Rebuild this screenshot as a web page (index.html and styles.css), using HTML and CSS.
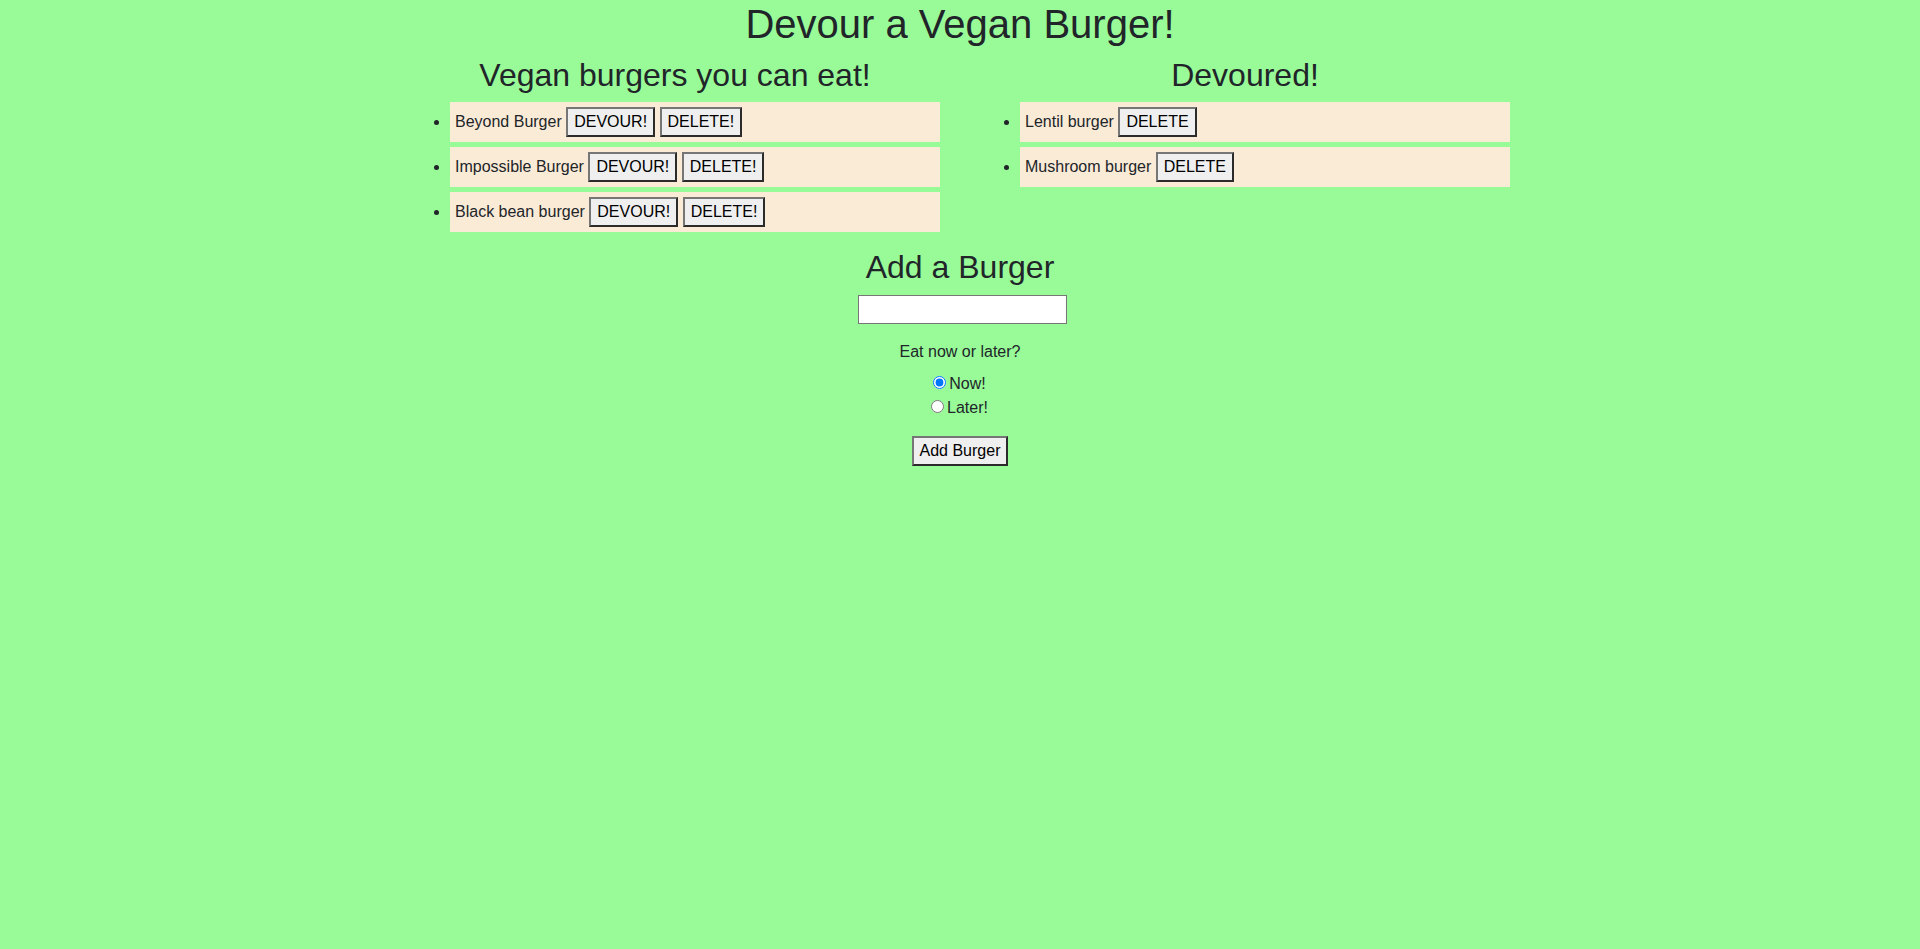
FILE: index.html
```html
<!DOCTYPE html>
<html lang="en">
<head>
<meta charset="utf-8">
<title>Devour a Vegan Burger!</title>
<link rel="stylesheet" href="styles.css">
</head>
<body>
<div class="page">
  <h1 class="title">Devour a Vegan Burger!</h1>
  <div class="columns">
    <div class="col">
      <h2 class="col-title">Vegan burgers you can eat!</h2>
      <ul class="burger-list">
        <li class="burger">Beyond Burger <button class="btn">DEVOUR!</button> <button class="btn">DELETE!</button></li>
        <li class="burger">Impossible Burger <button class="btn">DEVOUR!</button> <button class="btn">DELETE!</button></li>
        <li class="burger">Black bean burger <button class="btn">DEVOUR!</button> <button class="btn">DELETE!</button></li>
      </ul>
    </div>
    <div class="col">
      <h2 class="col-title">Devoured!</h2>
      <ul class="burger-list">
        <li class="burger">Lentil burger <button class="btn">DELETE</button></li>
        <li class="burger">Mushroom burger <button class="btn">DELETE</button></li>
      </ul>
    </div>
  </div>
  <form class="add-form">
    <h2 class="form-title">Add a Burger</h2>
    <div class="input-row"><input class="name-input" type="text"></div>
    <p class="question">Eat now or later?</p>
    <div class="radio-row"><input type="radio" name="when" id="now" checked><label for="now">Now!</label></div>
    <div class="radio-row"><input type="radio" name="when" id="later"><label for="later">Later!</label></div>
    <div class="submit-row"><button type="button" class="btn">Add Burger</button></div>
  </form>
</div>
</body>
</html>
```

FILE: styles.css
```css
html, body {
  margin: 0;
  padding: 0;
}

body {
  background: #98fb98;
  color: #212529;
  font-family: "Liberation Sans", Arial, sans-serif;
  font-size: 16px;
  line-height: 1.5;
  min-height: 949px;
}

.page {
  width: 1110px;
  margin: 0 auto;
}

.title {
  margin: 0 0 8px;
  font-size: 40px;
  font-weight: 400;
  line-height: 1.2;
  text-align: center;
}

.columns {
  display: grid;
  grid-template-columns: 1fr 1fr;
  column-gap: 30px;
}

.col-title,
.form-title {
  margin: 0 0 8px;
  font-size: 32px;
  font-weight: 400;
  line-height: 1.2;
  text-align: center;
}

.burger-list {
  margin: 0 0 16px;
  padding-left: 40px;
}

.burger {
  margin: 5px;
  padding: 5px;
  background: #faebd7;
  height: 30px;
}

.btn {
  font-family: inherit;
  font-size: 16px;
  line-height: 24px;
  color: #000;
  background: #efefef;
  padding: 1px 6px;
  margin: 0;
  border-width: 2px;
  border-style: solid;
  border-color: #767676 #2b2b2b #2b2b2b #767676;
  border-radius: 0;
}

.add-form {
  text-align: center;
}

.input-row {
  display: flex;
  justify-content: center;
  padding-left: 5px;
  margin-bottom: 16px;
}

.name-input {
  box-sizing: border-box;
  width: 209px;
  height: 29px;
  margin: 0;
  border: 1px solid #767676;
  background: #fff;
  font-family: inherit;
  font-size: 16px;
}

.question {
  margin: 0 0 8px;
  line-height: 24px;
}

.radio-row {
  line-height: 24px;
  padding-right: 6px;
}

.radio-row input {
  margin: 3px 3px 0 5px;
}

.submit-row {
  margin-top: 16px;
}
```
